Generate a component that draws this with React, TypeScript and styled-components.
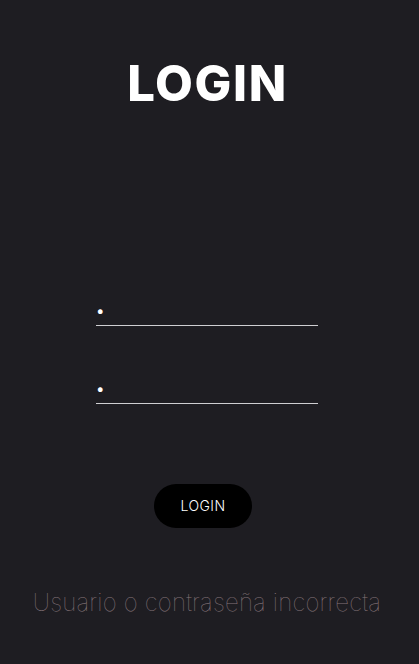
import React from "react";
import styled, { createGlobalStyle } from "styled-components";

const Global = createGlobalStyle`
  html, body { margin: 0; padding: 0; background: #1e1d22; }
  * { box-sizing: border-box; }
`;

const Page = styled.main`
  width: 419px;
  height: 664px;
  padding-right: 5px;
  background: #1e1d22;
  display: flex;
  flex-direction: column;
  align-items: center;
  font-family: Inter, "Noto Sans", sans-serif;
`;

const Title = styled.h1`
  margin: 59px 0 0;
  font-family: Inter, sans-serif;
  font-weight: 800;
  font-size: 49px;
  line-height: 50px;
  color: #ffffff;
  letter-spacing: 1.6px;
  padding-left: 1px;
`;

const Form = styled.form`
  margin-top: 187px;
  display: flex;
  flex-direction: column;
  align-items: center;
  gap: 48px;
`;

const Field = styled.input`
  width: 222px;
  height: 30px;
  padding: 0 0 1px 0;
  border: none;
  border-bottom: 1px solid #cfcfd2;
  background: transparent;
  color: #ffffff;
  font-family: Inter, sans-serif;
  font-size: 15px;
  outline: none;
`;

const Button = styled.button`
  margin: 80px 8px 0 0;
  width: 98px;
  height: 44px;
  padding: 0 0 2px;
  border: none;
  border-radius: 22px;
  background: #000000;
  color: #ffffff;
  font-family: Inter, sans-serif;
  font-weight: 300;
  font-size: 14px;
  letter-spacing: 0.4px;
`;

const ErrorText = styled.p`
  margin: 61px 0 0;
  font-family: Inter, sans-serif;
  font-weight: 100;
  font-size: 24px;
  line-height: 28px;
  color: #86757a;
  letter-spacing: 0.2px;
`;

export default function App() {
  return (
    <>
      <Global />
      <Page>
        <Title>LOGIN</Title>
        <Form onSubmit={(e) => e.preventDefault()}>
          <Field type="text" defaultValue="•" />
          <Field type="text" defaultValue="•" />
        </Form>
        <Button type="button">LOGIN</Button>
        <ErrorText>Usuario o contraseña incorrecta</ErrorText>
      </Page>
    </>
  );
}
